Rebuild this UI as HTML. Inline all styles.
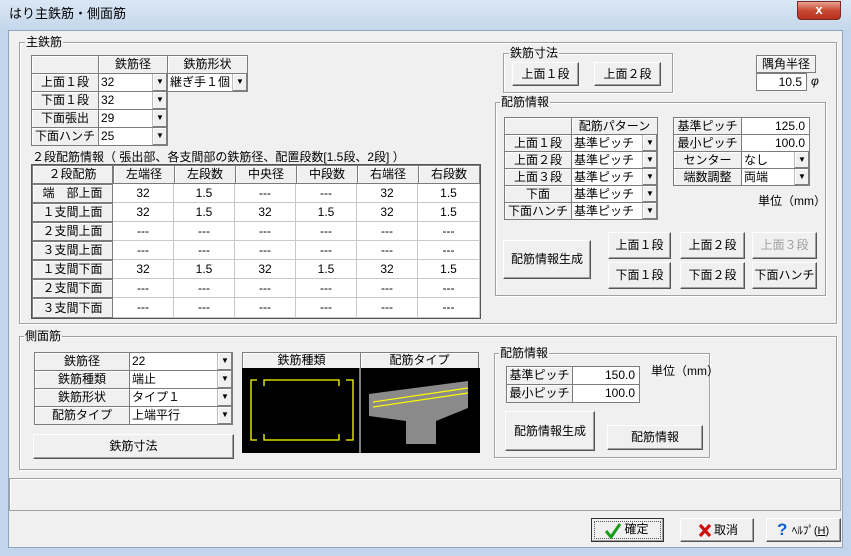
<!DOCTYPE html>
<html><head><meta charset="utf-8"><style>
*{margin:0;padding:0;box-sizing:border-box}
body{width:851px;height:556px;overflow:hidden;background:#c2d5ea;font-family:"Liberation Sans","Noto Sans CJK JP","IPAGothic",sans-serif;font-size:12px;color:#000;position:relative}
.a{position:absolute}
.lb{position:absolute;background:#f0f0f0;border:1px solid #7c7c7c;box-shadow:inset 1px 1px #fff;text-align:center;white-space:nowrap;overflow:hidden}
.in{position:absolute;background:#fff;border:1px solid #7c7c7c;white-space:nowrap;overflow:hidden;padding-left:2px}
.ar{position:absolute;right:0;top:0;bottom:0;width:15px;background:#f0f0f0;border-left:1px solid #bbb;box-shadow:inset -1px -1px #808080,inset 1px 1px #fff;font-size:8px;text-align:center}
.bt{position:absolute;background:#f0f0f0;border:1px solid;border-color:#fff #555 #555 #fff;box-shadow:inset -1px -1px #a0a0a0;text-align:center;white-space:nowrap}
.gb{position:absolute;border:1px solid #a0a0a0;box-shadow:1px 1px #fff,inset 1px 1px #fff}
.gt{position:absolute;background:#f0f0f0;padding:0 1px;line-height:14px}
.c{position:absolute;background:#fff;border-right:1px solid #c8c8c8;border-bottom:1px solid #c8c8c8;text-align:center;line-height:18px}
.r{text-align:right;padding-right:4px}
</style></head><body>
<!-- title bar -->
<div class="a" style="left:0;top:0;width:851px;height:30px;background:linear-gradient(#dbe7f4,#c4d7ec)"></div>
<div class="a" style="left:9px;top:6px;font-size:13px;line-height:16px">はり主鉄筋・側面筋</div>
<div class="a" style="left:797px;top:1px;width:44px;height:19px;border-radius:0 0 4px 4px;background:linear-gradient(#e8a18f,#c84a32 50%,#b8301c);border:1px solid #7a2a20;color:#fff;font-weight:bold;text-align:center;font-size:13px;line-height:16px">x</div>
<!-- client -->
<div class="a" style="left:8px;top:30px;width:835px;height:518px;background:#f0f0f0;border:1px solid #8ea5c0"></div>

<!-- 主鉄筋 group -->
<div class="gb" style="left:19px;top:42px;width:818px;height:282px"></div>
<div class="gt" style="left:25px;top:35px">主鉄筋</div>

<div class="lb" style="left:31px;top:55px;width:68px;height:19px"></div>
<div class="lb" style="left:98px;top:55px;width:70px;height:19px;line-height:17px">鉄筋径</div>
<div class="lb" style="left:167px;top:55px;width:81px;height:19px;line-height:17px">鉄筋形状</div>
<div class="lb" style="left:31px;top:73px;width:68px;height:19px;line-height:17px">上面１段</div>
<div class="lb" style="left:31px;top:91px;width:68px;height:19px;line-height:17px">下面１段</div>
<div class="lb" style="left:31px;top:109px;width:68px;height:19px;line-height:17px">下面張出</div>
<div class="lb" style="left:31px;top:127px;width:68px;height:19px;line-height:17px">下面ハンチ</div>
<div class="in" style="left:98px;top:73px;width:70px;height:19px;line-height:17px">32<div class="ar" style="line-height:16px">▼</div></div>
<div class="in" style="left:98px;top:91px;width:70px;height:19px;line-height:17px">32<div class="ar" style="line-height:16px">▼</div></div>
<div class="in" style="left:98px;top:109px;width:70px;height:19px;line-height:17px">29<div class="ar" style="line-height:16px">▼</div></div>
<div class="in" style="left:98px;top:127px;width:70px;height:19px;line-height:17px">25<div class="ar" style="line-height:16px">▼</div></div>
<div class="in" style="left:167px;top:73px;width:81px;height:19px;line-height:17px">継ぎ手１個<div class="ar" style="line-height:16px">▼</div></div>

<div class="a" style="left:32px;top:149px;line-height:16px">２段配筋情報（ 張出部、各支間部の鉄筋径、配置段数[1.5段、2段] ）</div>

<div class="a" style="left:31px;top:164px;width:450px;height:155px;background:#fff;border:1px solid #555"></div>
<div class="lb" style="left:32px;top:165px;width:81px;height:19px;line-height:17px">２段配筋</div>
<div class="lb" style="left:113px;top:165px;width:62px;height:19px;line-height:17px">左端径</div>
<div class="lb" style="left:174px;top:165px;width:62px;height:19px;line-height:17px">左段数</div>
<div class="lb" style="left:235px;top:165px;width:62px;height:19px;line-height:17px">中央径</div>
<div class="lb" style="left:296px;top:165px;width:62px;height:19px;line-height:17px">中段数</div>
<div class="lb" style="left:357px;top:165px;width:62px;height:19px;line-height:17px">右端径</div>
<div class="lb" style="left:418px;top:165px;width:62px;height:19px;line-height:17px">右段数</div>

<div class="lb" style="left:32px;top:184px;width:81px;height:19px;line-height:17px">端　部上面</div>
<div class="lb" style="left:32px;top:203px;width:81px;height:19px;line-height:17px">１支間上面</div>
<div class="lb" style="left:32px;top:222px;width:81px;height:19px;line-height:17px">２支間上面</div>
<div class="lb" style="left:32px;top:241px;width:81px;height:19px;line-height:17px">３支間上面</div>
<div class="lb" style="left:32px;top:260px;width:81px;height:19px;line-height:17px">１支間下面</div>
<div class="lb" style="left:32px;top:279px;width:81px;height:19px;line-height:17px">２支間下面</div>
<div class="lb" style="left:32px;top:298px;width:81px;height:20px;line-height:18px">３支間下面</div>

<div class="c" style="left:113px;top:184px;width:61px;height:19px">32</div><div class="c" style="left:174px;top:184px;width:61px;height:19px">1.5</div><div class="c" style="left:235px;top:184px;width:61px;height:19px">---</div><div class="c" style="left:296px;top:184px;width:61px;height:19px">---</div><div class="c" style="left:357px;top:184px;width:61px;height:19px">32</div><div class="c" style="left:418px;top:184px;width:62px;height:19px">1.5</div>
<div class="c" style="left:113px;top:203px;width:61px;height:19px">32</div><div class="c" style="left:174px;top:203px;width:61px;height:19px">1.5</div><div class="c" style="left:235px;top:203px;width:61px;height:19px">32</div><div class="c" style="left:296px;top:203px;width:61px;height:19px">1.5</div><div class="c" style="left:357px;top:203px;width:61px;height:19px">32</div><div class="c" style="left:418px;top:203px;width:62px;height:19px">1.5</div>
<div class="c" style="left:113px;top:222px;width:61px;height:19px">---</div><div class="c" style="left:174px;top:222px;width:61px;height:19px">---</div><div class="c" style="left:235px;top:222px;width:61px;height:19px">---</div><div class="c" style="left:296px;top:222px;width:61px;height:19px">---</div><div class="c" style="left:357px;top:222px;width:61px;height:19px">---</div><div class="c" style="left:418px;top:222px;width:62px;height:19px">---</div>
<div class="c" style="left:113px;top:241px;width:61px;height:19px">---</div><div class="c" style="left:174px;top:241px;width:61px;height:19px">---</div><div class="c" style="left:235px;top:241px;width:61px;height:19px">---</div><div class="c" style="left:296px;top:241px;width:61px;height:19px">---</div><div class="c" style="left:357px;top:241px;width:61px;height:19px">---</div><div class="c" style="left:418px;top:241px;width:62px;height:19px">---</div>
<div class="c" style="left:113px;top:260px;width:61px;height:19px">32</div><div class="c" style="left:174px;top:260px;width:61px;height:19px">1.5</div><div class="c" style="left:235px;top:260px;width:61px;height:19px">32</div><div class="c" style="left:296px;top:260px;width:61px;height:19px">1.5</div><div class="c" style="left:357px;top:260px;width:61px;height:19px">32</div><div class="c" style="left:418px;top:260px;width:62px;height:19px">1.5</div>
<div class="c" style="left:113px;top:279px;width:61px;height:19px">---</div><div class="c" style="left:174px;top:279px;width:61px;height:19px">---</div><div class="c" style="left:235px;top:279px;width:61px;height:19px">---</div><div class="c" style="left:296px;top:279px;width:61px;height:19px">---</div><div class="c" style="left:357px;top:279px;width:61px;height:19px">---</div><div class="c" style="left:418px;top:279px;width:62px;height:19px">---</div>
<div class="c" style="left:113px;top:298px;width:61px;height:20px">---</div><div class="c" style="left:174px;top:298px;width:61px;height:20px">---</div><div class="c" style="left:235px;top:298px;width:61px;height:20px">---</div><div class="c" style="left:296px;top:298px;width:61px;height:20px">---</div><div class="c" style="left:357px;top:298px;width:61px;height:20px">---</div><div class="c" style="left:418px;top:298px;width:62px;height:20px">---</div>

<!-- 鉄筋寸法 group -->
<div class="gb" style="left:503px;top:53px;width:170px;height:40px"></div>
<div class="gt" style="left:509px;top:46px">鉄筋寸法</div>
<div class="bt" style="left:512px;top:62px;width:67px;height:24px;line-height:22px">上面１段</div>
<div class="bt" style="left:594px;top:62px;width:67px;height:24px;line-height:22px">上面２段</div>

<div class="lb" style="left:756px;top:55px;width:60px;height:18px;line-height:16px">隅角半径</div>
<div class="in r" style="left:756px;top:73px;width:51px;height:18px;line-height:16px">10.5</div>
<div class="a" style="left:811px;top:74px;font-style:italic">φ</div>

<!-- 配筋情報 group -->
<div class="gb" style="left:495px;top:102px;width:331px;height:194px"></div>
<div class="gt" style="left:500px;top:95px">配筋情報</div>
<div class="lb" style="left:504px;top:117px;width:68px;height:18px"></div>
<div class="lb" style="left:571px;top:117px;width:87px;height:18px;line-height:16px">配筋パターン</div>
<div class="lb" style="left:504px;top:134px;width:68px;height:18px;line-height:16px">上面１段</div>
<div class="lb" style="left:504px;top:151px;width:68px;height:18px;line-height:16px">上面２段</div>
<div class="lb" style="left:504px;top:168px;width:68px;height:18px;line-height:16px">上面３段</div>
<div class="lb" style="left:504px;top:185px;width:68px;height:18px;line-height:16px">下面</div>
<div class="lb" style="left:504px;top:202px;width:68px;height:18px;line-height:16px">下面ハンチ</div>
<div class="in" style="left:571px;top:134px;width:87px;height:18px;line-height:16px">基準ピッチ<div class="ar" style="line-height:15px">▼</div></div>
<div class="in" style="left:571px;top:151px;width:87px;height:18px;line-height:16px">基準ピッチ<div class="ar" style="line-height:15px">▼</div></div>
<div class="in" style="left:571px;top:168px;width:87px;height:18px;line-height:16px">基準ピッチ<div class="ar" style="line-height:15px">▼</div></div>
<div class="in" style="left:571px;top:185px;width:87px;height:18px;line-height:16px">基準ピッチ<div class="ar" style="line-height:15px">▼</div></div>
<div class="in" style="left:571px;top:202px;width:87px;height:18px;line-height:16px">基準ピッチ<div class="ar" style="line-height:15px">▼</div></div>

<div class="lb" style="left:673px;top:117px;width:69px;height:18px;line-height:16px">基準ピッチ</div>
<div class="lb" style="left:673px;top:134px;width:69px;height:18px;line-height:16px">最小ピッチ</div>
<div class="lb" style="left:673px;top:151px;width:69px;height:18px;line-height:16px">センター</div>
<div class="lb" style="left:673px;top:168px;width:69px;height:18px;line-height:16px">端数調整</div>
<div class="in r" style="left:741px;top:117px;width:69px;height:18px;line-height:16px">125.0</div>
<div class="in r" style="left:741px;top:134px;width:69px;height:18px;line-height:16px">100.0</div>
<div class="in" style="left:741px;top:151px;width:69px;height:18px;line-height:16px">なし<div class="ar" style="line-height:15px">▼</div></div>
<div class="in" style="left:741px;top:168px;width:69px;height:18px;line-height:16px">両端<div class="ar" style="line-height:15px">▼</div></div>
<div class="a" style="left:758px;top:192px">単位（mm）</div>

<div class="bt" style="left:503px;top:240px;width:88px;height:39px;line-height:37px">配筋情報生成</div>
<div class="bt" style="left:608px;top:232px;width:63px;height:27px;line-height:25px">上面１段</div>
<div class="bt" style="left:680px;top:232px;width:65px;height:27px;line-height:25px">上面２段</div>
<div class="bt" style="left:752px;top:232px;width:65px;height:27px;line-height:25px;color:#a0a0a0">上面３段</div>
<div class="bt" style="left:608px;top:262px;width:63px;height:27px;line-height:25px">下面１段</div>
<div class="bt" style="left:680px;top:262px;width:65px;height:27px;line-height:25px">下面２段</div>
<div class="bt" style="left:752px;top:262px;width:65px;height:27px;line-height:25px">下面ハンチ</div>

<!-- 側面筋 -->
<div class="gb" style="left:19px;top:336px;width:818px;height:134px"></div>
<div class="gt" style="left:24px;top:329px">側面筋</div>
<div class="lb" style="left:34px;top:352px;width:96px;height:19px;line-height:17px">鉄筋径</div>
<div class="lb" style="left:34px;top:370px;width:96px;height:19px;line-height:17px">鉄筋種類</div>
<div class="lb" style="left:34px;top:388px;width:96px;height:19px;line-height:17px">鉄筋形状</div>
<div class="lb" style="left:34px;top:406px;width:96px;height:19px;line-height:17px">配筋タイプ</div>
<div class="in" style="left:129px;top:352px;width:104px;height:19px;line-height:17px">22<div class="ar" style="line-height:16px">▼</div></div>
<div class="in" style="left:129px;top:370px;width:104px;height:19px;line-height:17px">端止<div class="ar" style="line-height:16px">▼</div></div>
<div class="in" style="left:129px;top:388px;width:104px;height:19px;line-height:17px">タイプ１<div class="ar" style="line-height:16px">▼</div></div>
<div class="in" style="left:129px;top:406px;width:104px;height:19px;line-height:17px">上端平行<div class="ar" style="line-height:16px">▼</div></div>
<div class="bt" style="left:33px;top:434px;width:201px;height:25px;line-height:23px">鉄筋寸法</div>

<div class="lb" style="left:242px;top:352px;width:119px;height:17px;line-height:15px">鉄筋種類</div>
<div class="lb" style="left:360px;top:352px;width:119px;height:17px;line-height:15px">配筋タイプ</div>
<svg class="a" style="left:242px;top:368px" width="238" height="85" viewBox="0 0 238 85">
<rect width="238" height="85" fill="#000"/>
<line x1="118" y1="0" x2="118" y2="85" stroke="#fff"/>
<g stroke="#ff0" fill="none" stroke-width="1.3">
<path d="M15 12H9V72H15M22 18V12H97V18M22 66V72H97V66M104 12H111V72H104"/>
</g>
<polygon points="127,26 226,13 226,40 194,53 194,76 164,76 164,53 127,48" fill="#8a8a8a"/>
<g stroke="#ff0" stroke-width="1.2"><line x1="131" y1="34" x2="226" y2="20"/><line x1="131" y1="39" x2="226" y2="25"/></g>
</svg>

<div class="gb" style="left:494px;top:353px;width:216px;height:105px"></div>
<div class="gt" style="left:499px;top:346px">配筋情報</div>
<div class="lb" style="left:506px;top:366px;width:67px;height:19px;line-height:17px">基準ピッチ</div>
<div class="lb" style="left:506px;top:384px;width:67px;height:19px;line-height:17px">最小ピッチ</div>
<div class="in r" style="left:572px;top:366px;width:68px;height:19px;line-height:17px">150.0</div>
<div class="in r" style="left:572px;top:384px;width:68px;height:19px;line-height:17px">100.0</div>
<div class="a" style="left:651px;top:362px">単位（mm）</div>
<div class="bt" style="left:505px;top:411px;width:90px;height:40px;line-height:38px">配筋情報生成</div>
<div class="bt" style="left:607px;top:425px;width:96px;height:25px;line-height:23px">配筋情報</div>

<!-- status -->
<div class="a" style="left:9px;top:478px;width:832px;height:33px;border:1px solid #a0a0a0;box-shadow:inset 1px 1px #fff"></div>

<!-- bottom buttons -->
<div class="bt" style="left:591px;top:518px;width:73px;height:24px;border:1px solid #333;line-height:20px"><div class="a" style="left:2px;top:2px;right:2px;bottom:2px;border:1px dotted #555"></div><svg class="a" style="left:12px;top:3px" width="18" height="17"><path d="M2 9L7 15L16 2" stroke="#1a9a1a" stroke-width="3" fill="none"/></svg><span style="margin-left:18px">確定</span></div>
<div class="bt" style="left:680px;top:518px;width:74px;height:24px;line-height:22px"><svg class="a" style="left:17px;top:4px" width="14" height="15"><path d="M2 2L12 13M12 2L2 13" stroke="#d01010" stroke-width="3.2"/></svg><span style="margin-left:18px">取消</span></div>
<div class="bt" style="left:766px;top:518px;width:75px;height:24px;line-height:22px"><span class="a" style="left:10px;top:1px;color:#1060d0;font-weight:bold;font-size:17px;line-height:20px">?</span><span style="margin-left:14px;font-size:11px">ﾍﾙﾌﾟ(<u>H</u>)</span></div>
</body></html>
